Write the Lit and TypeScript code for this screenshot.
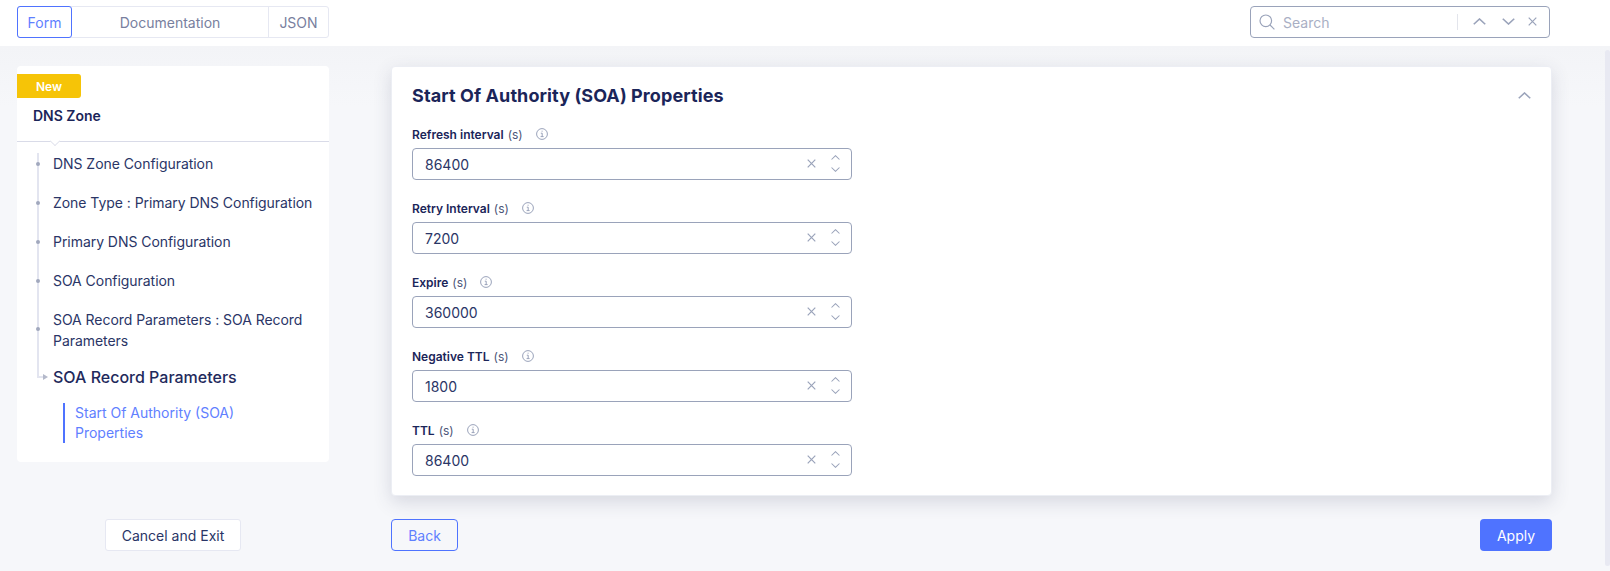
import { LitElement, html, css, svg } from "lit";
import { customElement } from "lit/decorators.js";

const fields = [
  ["Refresh interval", "86400"],
  ["Retry Interval", "7200"],
  ["Expire", "360000"],
  ["Negative TTL", "1800"],
  ["TTL", "86400"],
];
const steps = [
  "DNS Zone Configuration",
  "Zone Type : Primary DNS Configuration",
  "Primary DNS Configuration",
  "SOA Configuration",
  "SOA Record Parameters : SOA Record Parameters",
];

const chev = (up: boolean, w = 10, h = 6, c = "#9aa3ba", sw = 1.2) => html`<svg width=${w} height=${h} viewBox="0 0 10 6" fill="none" stroke=${c} stroke-width=${sw} preserveAspectRatio="none">${svg`<path d=${up ? "M.6 5.4 5 .8l4.4 4.6" : "M.6.6 5 5.2 9.4.6"} />`}</svg>`;
const cross = (s = 9) => html`<svg width=${s} height=${s} viewBox="0 0 9 9" fill="none" stroke="#9aa3ba" stroke-width="1.2"><path d="M.7.7l7.6 7.6M8.3.7.7 8.3"/></svg>`;
const info = html`<svg class="info" width="12" height="12" viewBox="0 0 12 12" fill="none" stroke="#9aa3ba" stroke-width="1"><circle cx="6" cy="6" r="5.4"/><path d="M4.8 5.2h1.4v3.4M4.6 8.6h3M5.6 3.2h1" /></svg>`;

@customElement("app-root")
export class AppRoot extends LitElement {
  static styles = css`
    :host { display: block; width: 1610px; height: 571px; overflow: hidden; background: #f6f7fa; font-family: Inter, "Liberation Sans", sans-serif; color: #1b2559; font-size: 14px; position: relative; }
    * { box-sizing: border-box; }
    header { height: 46px; background: #fff; padding: 6px 60px 0 17px; display: flex; justify-content: space-between; align-items: flex-start; }
    .tabs { display: flex; height: 32px; width: 312px; border: 1px solid #e6e8f2; border-radius: 3px; color: #78809e; font-size: 14px; }
    .tab { display: flex; align-items: center; justify-content: center; }
    .tab.form { width: 55px; margin: -1px 0 -1px -1px; border: 1px solid #4f73ff; border-radius: 3px; color: #5f80ff; }
    .tab.doc { flex: 1; border-right: 1px solid #e6e8f2; }
    .tab.json { width: 59px; }
    .search { width: 300px; height: 32px; border: 1px solid #9aa3ba; border-radius: 4px; display: flex; align-items: center; padding: 0 11px 0 8px; color: #a9afc4; font-size: 14px; }
    .search .ph { margin-left: 8px; width: 174px; }
    .search .sep { width: 1px; height: 16px; background: #e3e5ec; margin-right: 15px; }
    .search .a { display: flex; margin-right: 16px; margin-top: -1px; }
    .search .a.last { margin-right: 13px; }
    .search .x { display: flex; margin-top: -1px; }
    main { display: flex; padding: 20px 58px 0 17px; background: linear-gradient(#f3f4f7, #f6f7fa 60px); height: 525px; }
    .left { width: 312px; flex: none; display: flex; flex-direction: column; align-items: center; }
    .panel { width: 100%; height: 396px; background: #fff; border-radius: 4px; padding-top: 8px; }
    .badge { width: 64px; height: 24px; background: #f6c407; border-radius: 0 3px 3px 0; color: #fff; font-weight: 600; font-size: 12px; display: flex; align-items: center; justify-content: center; }
    .title { height: 44px; padding-left: 16px; font-weight: 600; font-size: 14px; display: flex; align-items: center; padding-bottom: 9px; border-bottom: 1px solid #d9dbe8; position: relative; }
    .title::after { content: ""; position: absolute; left: 33px; bottom: -5px; width: 9px; height: 9px; background: #fff; border-right: 1px solid #d9dbe8; border-bottom: 1px solid #d9dbe8; transform: rotate(45deg) scale(.72); }
    .tree { position: relative; margin-left: 20px; padding-top: 10px; }
    .rail { position: absolute; left: 0; top: 11px; width: 2px; height: 224px; background: #e3e5f0; }
    .step { position: relative; padding-left: 16px; min-height: 39px; padding-top: 1px; line-height: 21px; font-size: 14px; letter-spacing: -.05px; color: #2a3566; width: 290px; }
    .step::before { content: ""; position: absolute; left: -1px; top: 50%; margin-top: -10px; width: 4px; height: 4px; border-radius: 50%; background: #a1a8bd; }
    .step.two { min-height: 52px; }
    .step.two::before { margin-top: -7px; }
    .active { position: relative; padding-left: 16px; margin-top: 5px; font-size: 16px; font-weight: 500; line-height: 24px; height: 38px; color: #1f2a5c; }
    .active .elbow { position: absolute; left: 0; top: 2px; width: 9px; height: 11px; border-left: 2px solid #e3e5f0; border-bottom: 2px solid #e3e5f0; }
    .active .tip { position: absolute; left: 6px; top: 9px; border-left: 5px solid #b4b9ca; border-top: 3px solid transparent; border-bottom: 3px solid transparent; }
    .sub { margin-left: 26px; border-left: 2px solid #4f73ff; padding-left: 10px; height: 40px; color: #5f80ff; line-height: 20px; font-size: 14px; width: 200px; }
    .cancel { margin-top: 57px; width: 136px; height: 32px; background: #fff; border: 1px solid #e6e8f2; border-radius: 3px; font-size: 14px; display: flex; align-items: center; justify-content: center; color: #2a3566; }
    .right { flex: 1; margin-left: 63px; display: flex; flex-direction: column; }
    .card { height: 430px; margin-left: -1px; background: #fff; border: 1px solid #eceef4; border-radius: 4px; box-shadow: 0 6px 18px rgba(60,65,100,.17); padding: 17px 20px 0; position: relative; }
    h2 { margin: 0; font-size: 18px; line-height: 24px; font-weight: 700; letter-spacing: .09px; color: #1b2559; height: 33px; }
    .collapse { position: absolute; right: 20px; top: 25px; display: flex; }
    .field { height: 74px; padding-top: 9px; }
    .lab { display: flex; align-items: center; font-size: 12px; height: 16px; font-weight: 600; color: #1b2559; }
    .lab span { font-weight: 400; color: #4c5578; margin-left: 4px; }
    .info { margin-left: 13px; }
    .input { margin-top: 6px; width: 440px; height: 32px; border: 1px solid #9aa3ba; border-radius: 4px; display: flex; align-items: center; padding: 0 11px 0 12px; font-size: 14px; color: #2a3566; }
    .val { flex: 1; }
    .clear { display: flex; margin-right: 15px; margin-top: -2px; }
    .spin { display: flex; flex-direction: column; gap: 7px; margin-top: -1px; }
    .actions { display: flex; justify-content: space-between; margin-top: 23px; }
    .btn { height: 32px; border-radius: 4px; display: flex; align-items: center; justify-content: center; font-size: 14px; }
    .back { width: 67px; margin-left: -1px; border: 1px solid #4f73ff; color: #5f80ff; background: transparent; }
    .apply { width: 72px; background: #4f73ff; color: #fff; }
    .scroll { position: absolute; right: 0; top: 50px; bottom: 5px; width: 5px; border-radius: 3px; background: #e8e9f2; }
  `;
  render() {
    return html`
      <header>
        <div class="tabs">
          <div class="tab form">Form</div>
          <div class="tab doc">Documentation</div>
          <div class="tab json">JSON</div>
        </div>
        <div class="search">
          <svg width="16" height="16" viewBox="0 0 16 16" fill="none" stroke="#9aa3ba" stroke-width="1.2"><circle cx="6.8" cy="6.8" r="5.8"/><path d="M11 11l4.4 4.4"/></svg>
          <span class="ph">Search</span>
          <span class="sep"></span>
          <span class="a">${chev(true, 13, 7)}</span>
          <span class="a last">${chev(false, 13, 7)}</span>
          <span class="x">${cross(9)}</span>
        </div>
      </header>
      <main>
        <div class="left">
          <div class="panel">
            <div class="badge">New</div>
            <div class="title">DNS Zone</div>
            <div class="tree">
              <div class="rail"></div>
              ${steps.map((s, i) => html`<div class="step ${i === 4 ? "two" : ""}">${s}</div>`)}
              <div class="active"><i class="elbow"></i><i class="tip"></i>SOA Record Parameters</div>
              <div class="sub">Start Of Authority (SOA) Properties</div>
            </div>
          </div>
          <div class="cancel">Cancel and Exit</div>
        </div>
        <div class="right">
          <div class="card">
            <h2>Start Of Authority (SOA) Properties</h2>
            <div class="collapse">${chev(true, 13, 7)}</div>
            ${fields.map(([l, v]) => html`
              <div class="field">
                <div class="lab">${l}<span>(s)</span>${info}</div>
                <div class="input">
                  <span class="val">${v}</span>
                  <span class="clear">${cross(9)}</span>
                  <span class="spin">${chev(true, 9, 5)}${chev(false, 9, 5)}</span>
                </div>
              </div>`)}
          </div>
          <div class="actions">
            <div class="btn back">Back</div>
            <div class="btn apply">Apply</div>
          </div>
        </div>
      </main>
      <div class="scroll"></div>
    `;
  }
}
